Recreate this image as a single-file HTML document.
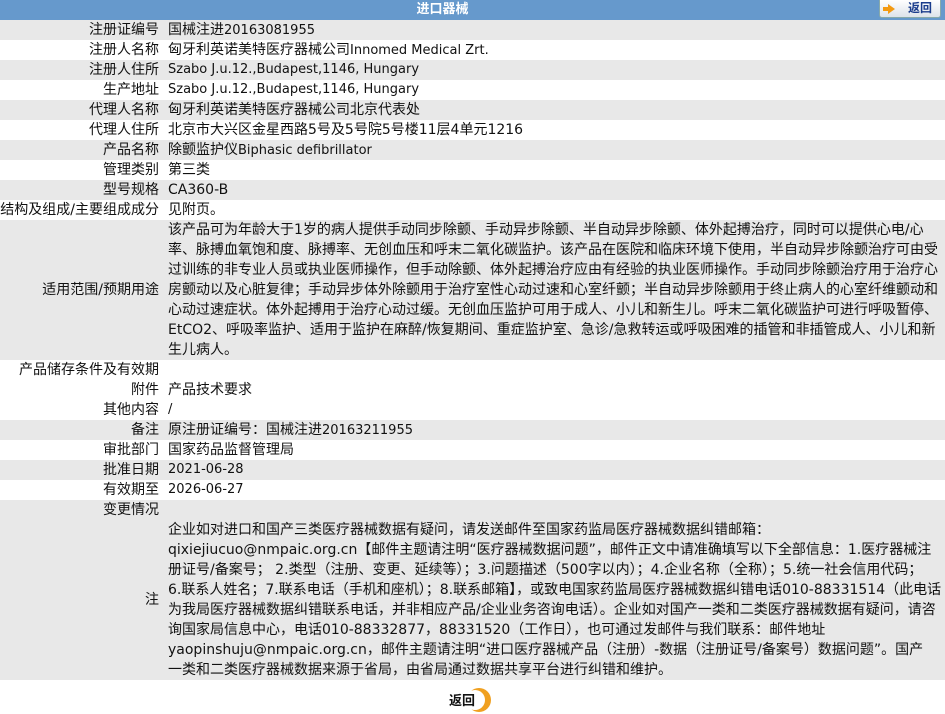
<!DOCTYPE html>
<html><head><meta charset="utf-8"><style>
*{margin:0;padding:0;box-sizing:border-box}
body{width:945px;height:713px;background:#fff;font-family:"DejaVu Sans","Noto Sans CJK SC",sans-serif;font-size:13px;color:#111;overflow:hidden;position:relative}
.hd{height:20px;background:#6699cc;color:#fff;font-weight:bold;text-align:center;line-height:19px;font-size:13px;padding-right:60px;position:relative}
.btn{position:absolute;right:4px;top:0;width:62px;height:18px;background:linear-gradient(#fff,#dde3ea);border:1px solid #8aa;border-top:none;border-radius:0 0 3px 3px;color:#1a3c8c;font-weight:bold;font-size:12px;line-height:17px;text-align:right;padding-right:8px}
.btn i{position:absolute;left:8px;top:4px;width:0;height:0;border-left:7px solid #f39a12;border-top:5px solid transparent;border-bottom:5px solid transparent}
.btn i:before{content:"";position:absolute;left:-12px;top:-2px;width:5px;height:4px;background:#f39a12}
.r{display:flex;line-height:20px;height:20px}
.g{background:#e8e8e8}
.l{width:159px;text-align:right;flex:none;white-space:nowrap;font-size:14px}
.v{padding-left:9px;white-space:nowrap}
.c{font-size:14px}
.back{position:absolute;left:447px;top:686px;width:50px;height:28px}
</style></head><body>
<div class="hd">进口器械<div class="btn"><i></i>返回</div></div>
<div class="r g"><div class="l">注册证编号</div><div class="v"><span class="c">国械注进</span>20163081955</div></div>
<div class="r"><div class="l">注册人名称</div><div class="v"><span class="c">匈牙利英诺美特医疗器械公司</span>Innomed Medical Zrt.</div></div>
<div class="r g"><div class="l">注册人住所</div><div class="v">Szabo J.u.12.,Budapest,1146, Hungary</div></div>
<div class="r"><div class="l">生产地址</div><div class="v">Szabo J.u.12.,Budapest,1146, Hungary</div></div>
<div class="r g"><div class="l">代理人名称</div><div class="v c">匈牙利英诺美特医疗器械公司北京代表处</div></div>
<div class="r"><div class="l">代理人住所</div><div class="v c">北京市大兴区金星西路5号及5号院5号楼11层4单元1216</div></div>
<div class="r g"><div class="l">产品名称</div><div class="v"><span class="c">除颤监护仪</span>Biphasic defibrillator</div></div>
<div class="r"><div class="l">管理类别</div><div class="v c">第三类</div></div>
<div class="r g"><div class="l">型号规格</div><div class="v c">CA360-B</div></div>
<div class="r"><div class="l" style="direction:rtl;overflow:visible"><span style="direction:ltr;unicode-bidi:embed">结构及组成/主要组成成分</span></div><div class="v c">见附页。</div></div>
<div class="r g" style="height:140px;align-items:center"><div class="l">适用范围/预期用途</div><div class="v c" style="align-self:flex-start">该产品可为年龄大于1岁的病人提供手动同步除颤、手动异步除颤、半自动异步除颤、体外起搏治疗，同时可以提供心电/心<br>率、脉搏血氧饱和度、脉搏率、无创血压和呼末二氧化碳监护。该产品在医院和临床环境下使用，半自动异步除颤治疗可由受<br>过训练的非专业人员或执业医师操作，但手动除颤、体外起搏治疗应由有经验的执业医师操作。手动同步除颤治疗用于治疗心<br>房颤动以及心脏复律；手动异步体外除颤用于治疗室性心动过速和心室纤颤；半自动异步除颤用于终止病人的心室纤维颤动和<br>心动过速症状。体外起搏用于治疗心动过缓。无创血压监护可用于成人、小儿和新生儿。呼末二氧化碳监护可进行呼吸暂停、<br>EtCO2、呼吸率监护、适用于监护在麻醉/恢复期间、重症监护室、急诊/急救转运或呼吸困难的插管和非插管成人、小儿和新<br>生儿病人。</div></div>
<div class="r"><div class="l">产品储存条件及有效期</div><div class="v"></div></div>
<div class="r"><div class="l">附件</div><div class="v c">产品技术要求</div></div>
<div class="r"><div class="l">其他内容</div><div class="v">/</div></div>
<div class="r g"><div class="l">备注</div><div class="v"><span class="c">原注册证编号：国械注进</span>20163211955</div></div>
<div class="r"><div class="l">审批部门</div><div class="v c">国家药品监督管理局</div></div>
<div class="r g"><div class="l">批准日期</div><div class="v">2021-06-28</div></div>
<div class="r"><div class="l">有效期至</div><div class="v">2026-06-27</div></div>
<div class="r g"><div class="l">变更情况</div><div class="v"></div></div>
<div class="r g" style="height:160px;align-items:center"><div class="l">注</div><div class="v c" style="align-self:flex-start">企业如对进口和国产三类医疗器械数据有疑问，请发送邮件至国家药监局医疗器械数据纠错邮箱：<br>qixiejiucuo@nmpaic.org.cn【邮件主题请注明“医疗器械数据问题”，邮件正文中请准确填写以下全部信息：1.医疗器械注<br>册证号/备案号； 2.类型（注册、变更、延续等）；3.问题描述（500字以内）；4.企业名称（全称）；5.统一社会信用代码；<br>6.联系人姓名；7.联系电话（手机和座机）；8.联系邮箱】，或致电国家药监局医疗器械数据纠错电话010-88331514（此电话<br>为我局医疗器械数据纠错联系电话，并非相应产品/企业业务咨询电话）。企业如对国产一类和二类医疗器械数据有疑问，请咨<br>询国家局信息中心，电话010-88332877，88331520（工作日），也可通过发邮件与我们联系：邮件地址<br>yaopinshuju@nmpaic.org.cn，邮件主题请注明“进口医疗器械产品（注册）-数据（注册证号/备案号）数据问题”。国产<br>一类和二类医疗器械数据来源于省局，由省局通过数据共享平台进行纠错和维护。</div></div>
<svg class="back" viewBox="0 0 50 28"><circle cx="32" cy="14" r="12" fill="#f0a020"/><circle cx="28" cy="14" r="10" fill="#fff"/><text x="2" y="19" font-family="Noto Sans CJK SC,sans-serif" font-weight="bold" font-size="13" fill="#111">返回</text></svg>
</body></html>
